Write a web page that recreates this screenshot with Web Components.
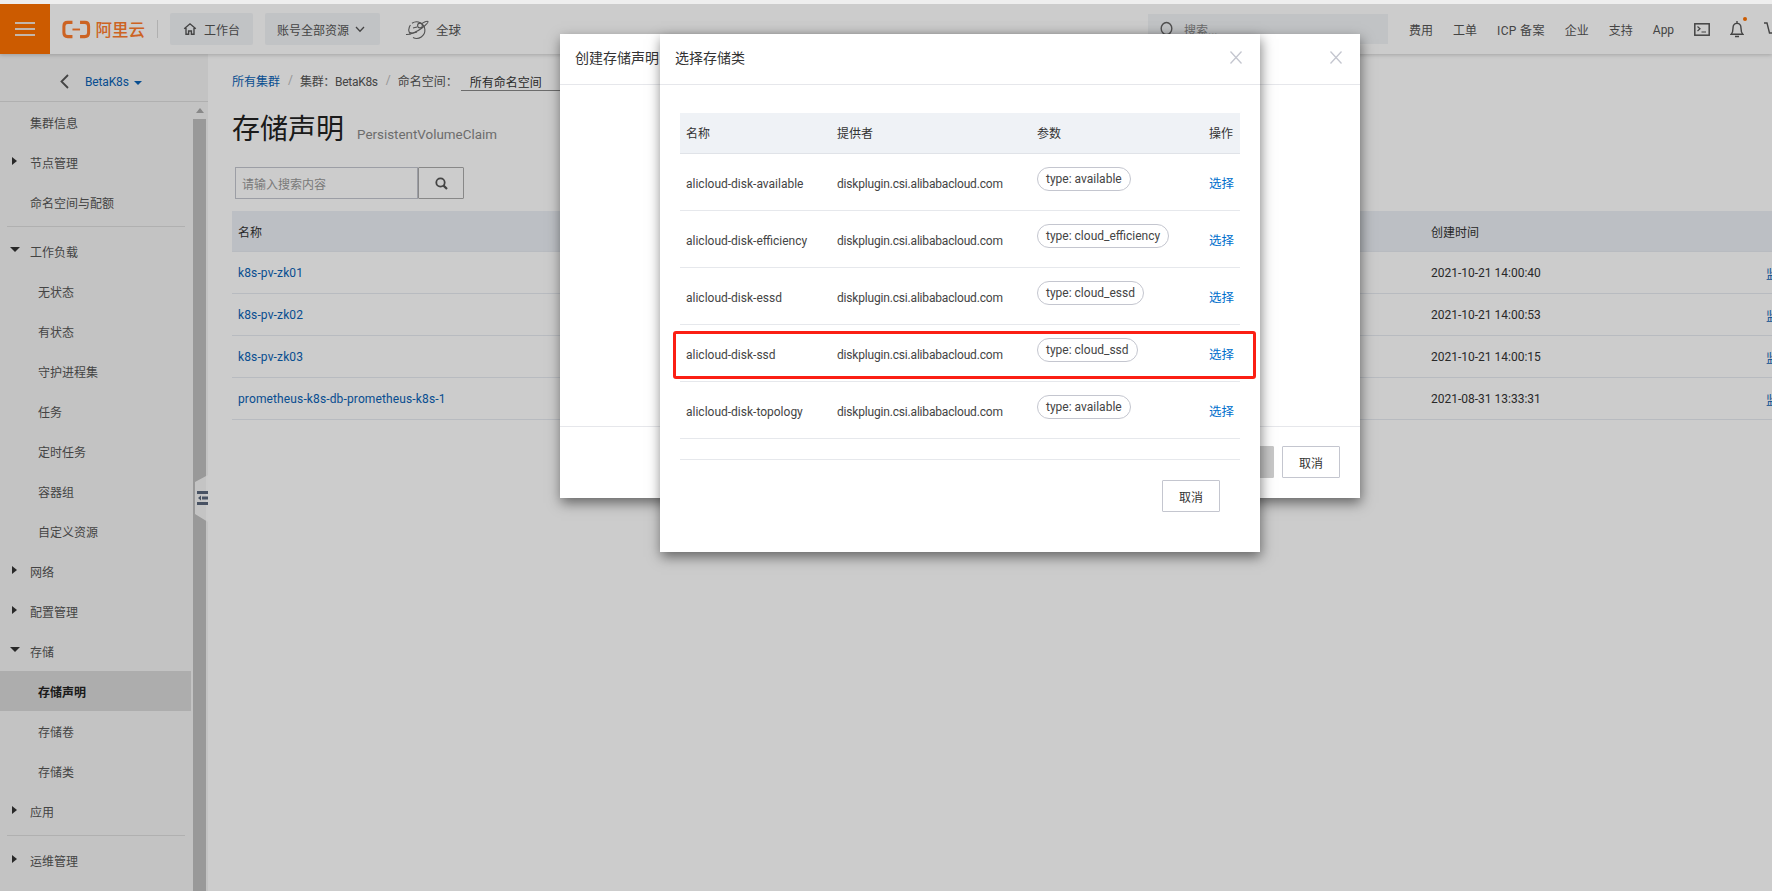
<!DOCTYPE html>
<html lang="zh"><head><meta charset="utf-8"><title>存储声明</title>
<style>
html,body{margin:0;padding:0;width:1772px;height:891px;overflow:hidden;background:#fff}
body{font:12px Roboto,"Noto Sans CJK SC",sans-serif;color:#333}
</style></head><body>
<x-app></x-app>
<script>
const FONT='Roboto,"Noto Sans CJK SC",sans-serif';
function def(name,css,html){
  customElements.define(name,class extends HTMLElement{
    constructor(){super();const r=this.attachShadow({mode:'open'});
      const h=typeof html==='function'?html(this):html;
      r.innerHTML='<style>'+css+'</style>'+h;}
  });
}
const ic={
 home:'<svg width="14" height="14" viewBox="0 0 14 14" fill="none" stroke="#555" stroke-width="1.4"><path d="M1.2 6.8 7 1.8l5.8 5M3 6v6.2h2.6V9h2.8v3.2H11V6"/></svg>',
 chev:'<svg width="10" height="7" viewBox="0 0 10 7" fill="none" stroke="#555" stroke-width="1.3"><path d="M1 1l4 4.2L9 1"/></svg>',
 globe:'<svg width="24" height="22" viewBox="0 0 24 22" fill="none" stroke="#666" stroke-width="1.1"><path d="M7 4.2A8.3 8.3 0 1 1 8 18.6M5.4 6a8.3 8.3 0 0 0 0 9.4"/><path d="M1 15.5C4 16 12 13 17 9c3-2.4 6.5-5.6 6-6.4-.5-.8-4 .6-6 1.8"/><circle cx="15" cy="6.5" r="2.4"/><path d="M8 9l4-1M5 13.5c1.8.8 5 .2 7-.6"/></svg>',
 search:'<svg width="14" height="16" viewBox="0 0 14 16" fill="none" stroke="#666" stroke-width="1.4"><ellipse cx="6.5" cy="7.5" rx="5.3" ry="6"/><path d="M10 13l1.5 2"/></svg>',
 term:'<svg width="16" height="13" viewBox="0 0 16 13" fill="none" stroke="#555" stroke-width="1.5"><rect x=".8" y=".8" width="14.4" height="11.4"/><path d="M3.5 3.5 6 5.8 3.5 8M7.5 9h4.5" stroke-width="1.2"/></svg>',
 bell:'<svg width="14" height="18" viewBox="0 0 14 18" fill="none" stroke="#555" stroke-width="1.4"><path d="M1.2 14.2h11.6c-1.3-1.4-1.8-3-1.8-6 0-2.8-1.5-4.8-4-4.8s-4 2-4 4.8c0 3-.5 4.6-1.800 6z"/><path d="M7 1v2.4M5 16.5h4" /></svg>',
 cart:'<svg width="14" height="18" viewBox="0 0 14 18" fill="none" stroke="#555" stroke-width="1.4"><path d="M0 3h3l2.5 10h8"/></svg>',
 find:'<svg width="13" height="13" viewBox="0 0 13 13" fill="none" stroke="#555" stroke-width="1.8"><circle cx="5.5" cy="5.5" r="4.2"/><path d="M8.6 8.6 12 12" stroke-width="2.2"/></svg>',
 logo:'<svg width="30" height="19" viewBox="0 0 30 19" fill="none" stroke="#ff7c2c" stroke-width="3.2"><path d="M11 2H6Q2 2 2 6v7q0 4 4 4h5M19 2h5q4 0 4 4v7q0 4-4 4h-5"/><path d="M11 9.5h8" stroke-width="2"/></svg>',
 menu:'<svg width="20" height="14" viewBox="0 0 20 14" stroke="#f4e4d8" stroke-width="1.8"><path d="M0 1h20M0 7h20M0 13h20"/></svg>'
};

def('x-nav-btn',`:host{display:flex;align-items:center;height:32px;background:#f2f4f7;border-radius:2px;color:#555;gap:7px;font-size:12px;box-sizing:border-box;white-space:nowrap}`,`<slot></slot>`);

def('x-header',`:host{display:flex;align-items:stretch;height:50px;background:#fff;box-shadow:0 1px 4px rgba(0,0,0,.2);position:relative;z-index:2;color:#555;font-family:${FONT};overflow:hidden;white-space:nowrap}
.burger{width:50px;background:#ff7200;display:flex;align-items:center;justify-content:center;flex:none}
.logo{display:flex;align-items:center;gap:5px;margin-left:12px;color:#ff7c2c;font-size:16.5px;font-weight:500;width:83px;flex:none}
.sep{width:1px;height:18px;background:#ddd;align-self:center;margin:0 12px;flex:none}
.gap{display:flex;align-items:center;gap:12px;flex:none}
x-nav-btn.a{width:83px;padding-left:13px}
x-nav-btn.b{width:115px;padding-left:12px;gap:6px}
.global{display:flex;align-items:center;gap:7px;margin-left:25px;font-size:12.5px;padding-top:1px;flex:none}
.search{position:absolute;left:1148px;top:10px;width:240px;height:30px;background:#f2f4f7;display:flex;align-items:center;gap:10px;padding-left:12px;box-sizing:border-box;color:#888}
.right{position:absolute;left:1409px;top:0;bottom:0;display:flex;align-items:center;gap:20px}
.right span{display:block}
.right .icp{letter-spacing:.35px}
.right .app{padding-top:2px}
.bell{position:relative;display:flex}
.bell i{position:absolute;left:13px;top:-3px;width:4px;height:4px;border-radius:50%;background:#ff7200}
`,`<div class="burger">${ic.menu}</div>
<div class="logo">${ic.logo}<span>阿里云</span></div><div class="sep"></div>
<div class="gap"><x-nav-btn class="a">${ic.home}<span>工作台</span></x-nav-btn><x-nav-btn class="b"><span>账号全部资源</span>${ic.chev}</x-nav-btn></div>
<div class="global">${ic.globe}<span>全球</span></div>
<div class="search">${ic.search}<span>搜索...</span></div>
<div class="right"><span>费用</span><span>工单</span><span class="icp">ICP 备案</span><span>企业</span><span>支持</span><span class="app">App</span>${ic.term}<div class="bell">${ic.bell}<i></i></div>${ic.cart}</div>`);

def('x-side-item',`:host{display:flex;align-items:center;height:40px;color:#555;font-size:12px;position:relative;white-space:nowrap}
:host([level="1"]){padding-left:30px}
:host([level="2"]){padding-left:38px}
:host([active]){background:#d9d9d9;color:#222;font-weight:700}
.tri{position:absolute;left:12px;top:15px;width:0;height:0;border-left:5px solid #333;border-top:4.5px solid transparent;border-bottom:4.5px solid transparent}
.tri.open{left:10px;top:16px;border-top:5px solid #333;border-left:5px solid transparent;border-right:5px solid transparent;border-bottom:0}
`,el=>{const a=el.getAttribute('arrow');return (a?`<span class="tri ${a==='open'?'open':''}"></span>`:'')+'<slot></slot>'});

def('x-sidebar',`:host{display:flex;flex-direction:column;width:208px;flex:none;background:#f4f4f4;position:relative;overflow:hidden;font-family:${FONT}}
.top{height:48px;border-bottom:1px solid #dcdcdc;display:flex;align-items:center;flex:none;padding:9px 0 0 60px;gap:16px;color:#0a62b5;font-size:12px;box-sizing:border-box;letter-spacing:-.15px}
.top svg{margin-bottom:2px}
.cap{display:inline-block;margin-left:5px;vertical-align:1px;border-top:4px solid #0a62b5;border-left:4px solid transparent;border-right:4px solid transparent}
.body{display:flex;flex:1;min-height:0}
.list{width:191px;flex:none}
.bar{width:13px;margin-left:2px;display:flex;flex-direction:column;flex:none}
.arr{height:17px;display:flex;justify-content:center;padding-top:6px;box-sizing:border-box}
.arr i{display:block;width:0;height:0;border-bottom:5px solid #aaa;border-left:4px solid transparent;border-right:4px solid transparent}
.thumb{flex:1;background:#c0c0c0}
.tog{position:absolute;left:195px;top:421px;width:13px;height:47px;background:#ffffff;opacity:.86;clip-path:polygon(0 7px,100% 0,100% 100%,0 39px)}
.ticon{position:absolute;left:197px;top:437px}
`,`<div class="top"><svg width="9" height="15" viewBox="0 0 9 15" fill="none" stroke="#555" stroke-width="1.8"><path d="M8 1 1.5 7.5 8 14"/></svg><span>BetaK8s<i class="cap"></i></span></div>
<div class="body"><div class="list"><slot></slot></div><div class="bar"><div class="arr"><i></i></div><div class="thumb"></div></div></div>
<div class="tog"></div>
<svg class="ticon" width="11" height="14" viewBox="0 0 11 14" fill="#5a677c"><rect width="11" height="3"/><rect width="11" height="3" y="11"/><rect x="5" y="5.5" width="6" height="3"/><path d="M4 4.5v5L1 7z"/></svg>`);

def('x-side-divider',`:host{display:flex;align-items:center;height:9px;padding:0 6px 0 7px}i{display:block;flex:1;height:1px;background:#dcdcdc}`,`<i></i>`);

def('x-crumbs',`:host{display:flex;align-items:center;height:22px;font-size:12px;color:#555;white-space:nowrap}
a{color:#0a62b5}.s{color:#bbb;margin:0 7px 0 8px}.t{letter-spacing:-.3px}
.sel{margin-left:3px;width:99px;height:22px;border-bottom:1px solid #888;box-sizing:border-box;padding:4px 0 0 9px;color:#333}
`,`<a>所有集群</a><span class="s">/</span><span class="t">集群：BetaK8s</span><span class="s">/</span><span>命名空间：</span><div class="sel">所有命名空间</div>`);

def('x-title',`:host{display:flex;align-items:baseline;gap:13px;height:44px;margin-top:17px;white-space:nowrap}
h1{margin:0;font-size:28px;font-weight:400;color:#222;line-height:44px}
span{font-size:13.4px;color:#888}`,`<h1><slot></slot></h1><span><slot name="sub"></slot></span>`);

def('x-search',`:host{display:flex;height:32px;margin:15px 0 12px 3px;width:229px}
.i{width:183px;border:1px solid #c4c6cf;box-sizing:border-box;padding-left:6px;display:flex;align-items:center;color:#999;background:#fff}
.b{width:46px;margin-left:0;border:1px solid #aaa;box-sizing:border-box;display:flex;align-items:center;justify-content:center;background:#fff;border-radius:1px}
`,`<div class="i">请输入搜索内容</div><div class="b">${ic.find}</div>`);

def('x-pvc-row',`:host{display:flex;height:42px;box-sizing:border-box;border-bottom:1px solid #e6eaf0;align-items:center;white-space:nowrap;color:#333;padding-top:1px}
:host([head]){height:41px;background:#ebeff5;padding:0}
.a{width:1199px;flex:none;padding-left:6px;box-sizing:border-box}
:host(:not([head])) .a{color:#0a62b5;letter-spacing:.13px}
.c{width:335px;flex:none}.o{color:#0a62b5}`,
el=>`<div class="a">${el.getAttribute('n')}</div><div class="c">${el.getAttribute('t')}</div><div class="o">${el.getAttribute('o')||''}</div>`);

def('x-main',`:host{display:block;flex:1;min-width:0;background:#fff;padding:15px 0 0 24px;box-sizing:border-box;overflow:hidden;font-family:${FONT}}`,`<slot></slot>`);

def('x-button',`:host{display:flex;align-items:center;justify-content:center;width:58px;height:32px;border:1px solid #c4c6cf;box-sizing:border-box;color:#333;background:#fff;border-radius:1px;font-size:12px;flex:none}
:host([disabled]){background:#c8c8c8;border-color:#c8c8c8;color:#c8c8c8}`,`<slot></slot>`);

def('x-modal',`:host{position:absolute;display:flex;flex-direction:column;background:#fff;box-shadow:1px 5px 12px rgba(0,0,0,.5);font-family:${FONT};color:#333;box-sizing:border-box}
.h{height:51px;border-bottom:1px solid #e6e7eb;box-sizing:border-box;flex:none;display:flex;align-items:center;padding:0 0 4px 15px;font-size:14px;position:relative;white-space:nowrap}
.x{position:absolute;right:18px;top:17px}
.b{flex:1;min-height:0}
`,`<div class="h"><slot name="title"></slot><svg class="x" width="12" height="13" viewBox="0 0 12 13" stroke="#c4c6cf" stroke-width="1.3"><path d="M.5.5l11 12M11.5.5l-11 12"/></svg></div><div class="b"><slot></slot></div>`);

def('x-sc-row',`:host{display:grid;grid-template-columns:151px 200px 172px 37px;height:57px;box-sizing:border-box;border-bottom:1px solid #e6e8ec;white-space:nowrap;font-size:12px;color:#444}
:host([head]){height:41px;background:#eff2f6;border-bottom:1px solid #e0e3e8;color:#333}
.c{padding:0 0 1px 6px;display:flex;align-items:center;box-sizing:border-box;overflow:visible}
:host(:not([head])) .c{padding:3px 0 0 6px}
:host(:not([head])) .c.l{padding:0 0 0 6px}
:host(:not([head])) .c.v{letter-spacing:-.18px}
:host(:not([head])) .p{padding:13px 0 0 6px;align-items:flex-start}
.pill{height:24px;border:1px solid #c4c6cf;border-radius:12px;padding:0 8px;display:flex;align-items:center;box-sizing:border-box;line-height:1;padding-bottom:1px}
a{color:#0070cc;font-size:12.5px}`,
el=>{const h=el.hasAttribute('head');return h?`<div class="c">名称</div><div class="c">提供者</div><div class="c">参数</div><div class="c">操作</div>`:
`<div class="c">${el.getAttribute('n')}</div><div class="c v">diskplugin.csi.alibabacloud.com</div><div class="c p"><div class="pill">type: ${el.getAttribute('t')}</div></div><div class="c l"><a>选择</a></div>`});

def('x-annot',`:host{position:absolute;left:673px;top:327px;width:583px;height:48px;border:3px solid #fb1f14;border-radius:3px;box-sizing:border-box;pointer-events:none}`,``);

def('x-back-body',`:host{display:flex;flex-direction:column;height:100%}
.f{margin-top:341px;border-top:1px solid #e6e7eb;flex:1;display:flex;justify-content:flex-end;gap:8px;padding:19px 20px 0 0;box-sizing:border-box}`,
`<div class="f"><x-button disabled style="width:58px">确定</x-button><x-button>取消</x-button></div>`);

def('x-front-body',`:host{display:block;padding:28px 20px 0}
.sp{height:20px;border-bottom:1px solid #e6e8ec}
.f{display:flex;justify-content:flex-end;padding:20px 20px 0 0}`,
`<slot></slot><div class="sp"></div><div class="f"><x-button>取消</x-button></div>`);

def('x-app',`:host{display:block;width:1772px;height:891px;overflow:hidden;font-family:${FONT};font-size:12px}
.strip{height:4px;background:#eeeeee}
.stage{position:relative;height:887px;overflow:hidden;display:flex;flex-direction:column}
.row{display:flex;flex:1;min-height:0}
.mask{position:absolute;inset:0;background:rgba(0,0,0,.2);z-index:5}
x-modal{z-index:6}
x-modal.back{left:560px;top:30px;width:800px;height:464px;z-index:6}
x-modal.front{left:660px;top:30px;width:600px;height:518px;z-index:7}
x-annot{z-index:8}
`,`<div class="strip"></div><div class="stage">
<x-header></x-header>
<div class="row">
<x-sidebar>
<x-side-item level="1">集群信息</x-side-item>
<x-side-item level="1" arrow="right">节点管理</x-side-item>
<x-side-item level="1">命名空间与配额</x-side-item>
<x-side-divider></x-side-divider>
<x-side-item level="1" arrow="open">工作负载</x-side-item>
<x-side-item level="2">无状态</x-side-item>
<x-side-item level="2">有状态</x-side-item>
<x-side-item level="2">守护进程集</x-side-item>
<x-side-item level="2">任务</x-side-item>
<x-side-item level="2">定时任务</x-side-item>
<x-side-item level="2">容器组</x-side-item>
<x-side-item level="2">自定义资源</x-side-item>
<x-side-item level="1" arrow="right">网络</x-side-item>
<x-side-item level="1" arrow="right">配置管理</x-side-item>
<x-side-item level="1" arrow="open">存储</x-side-item>
<x-side-item level="2" active>存储声明</x-side-item>
<x-side-item level="2">存储卷</x-side-item>
<x-side-item level="2">存储类</x-side-item>
<x-side-item level="1" arrow="right">应用</x-side-item>
<x-side-divider></x-side-divider>
<x-side-item level="1" arrow="right">运维管理</x-side-item>
</x-sidebar>
<x-main>
<x-crumbs></x-crumbs>
<x-title>存储声明<span slot="sub">PersistentVolumeClaim</span></x-title>
<x-search></x-search>
<x-pvc-row head n="名称" t="创建时间"></x-pvc-row>
<x-pvc-row n="k8s-pv-zk01" t="2021-10-21 14:00:40" o="监控"></x-pvc-row>
<x-pvc-row n="k8s-pv-zk02" t="2021-10-21 14:00:53" o="监控"></x-pvc-row>
<x-pvc-row n="k8s-pv-zk03" t="2021-10-21 14:00:15" o="监控"></x-pvc-row>
<x-pvc-row n="prometheus-k8s-db-prometheus-k8s-1" t="2021-08-31 13:33:31" o="监控"></x-pvc-row>
</x-main>
</div>
<div class="mask"></div>
<x-modal class="back"><span slot="title">创建存储声明</span><x-back-body></x-back-body></x-modal>
<x-modal class="front"><span slot="title">选择存储类</span><x-front-body>
<x-sc-row head></x-sc-row>
<x-sc-row n="alicloud-disk-available" t="available"></x-sc-row>
<x-sc-row n="alicloud-disk-efficiency" t="cloud_efficiency"></x-sc-row>
<x-sc-row n="alicloud-disk-essd" t="cloud_essd"></x-sc-row>
<x-sc-row n="alicloud-disk-ssd" t="cloud_ssd"></x-sc-row>
<x-sc-row n="alicloud-disk-topology" t="available"></x-sc-row>
</x-front-body></x-modal>
<x-annot></x-annot>
</div>`);
</script>
</body></html>
